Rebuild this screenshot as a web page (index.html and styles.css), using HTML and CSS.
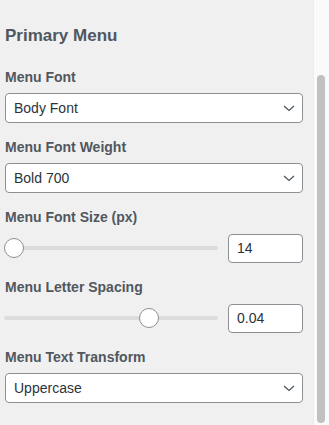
FILE: index.html
```html
<!DOCTYPE html>
<html>
<head>
<meta charset="utf-8">
<link rel="stylesheet" href="styles.css">
</head>
<body>
<div class="frame">
  <main class="panel">
    <h2 class="heading">Primary Menu</h2>

    <div class="field">
      <label class="label">Menu Font</label>
      <div class="select"><span>Body Font</span><svg class="chev" viewBox="0 0 12 7"><path d="M1 1l5 4.5L11 1"/></svg></div>
    </div>

    <div class="field">
      <label class="label">Menu Font Weight</label>
      <div class="select"><span>Bold 700</span><svg class="chev" viewBox="0 0 12 7"><path d="M1 1l5 4.5L11 1"/></svg></div>
    </div>

    <div class="field">
      <label class="label">Menu Font Size (px)</label>
      <div class="range-row">
        <div class="slider"><div class="track"></div><div class="thumb" style="left: 0px"></div></div>
        <div class="num">14</div>
      </div>
    </div>

    <div class="field">
      <label class="label">Menu Letter Spacing</label>
      <div class="range-row">
        <div class="slider"><div class="track"></div><div class="thumb" style="left: 135px"></div></div>
        <div class="num">0.04</div>
      </div>
    </div>

    <div class="field">
      <label class="label">Menu Text Transform</label>
      <div class="select"><span>Uppercase</span><svg class="chev" viewBox="0 0 12 7"><path d="M1 1l5 4.5L11 1"/></svg></div>
    </div>
  </main>
  <aside class="scrollbar"><div class="sb-thumb"></div></aside>
</div>
</body>
</html>
```

FILE: styles.css
```css
html, body {
  margin: 0;
  padding: 0;
  background: #f0f0f1;
  font-family: "Liberation Sans", Arial, sans-serif;
}

.frame {
  display: flex;
  height: 425px;
  overflow: hidden;
}

.panel {
  width: 298px;
  padding: 25px 10px 0 5px;
}

.heading {
  margin: 0 0 20px;
  font-size: 17px;
  line-height: 22px;
  font-weight: 700;
  color: #50575e;
}

.field {
  display: flex;
  flex-direction: column;
  gap: 6px;
  margin-bottom: 14px;
}

.label {
  font-size: 14px;
  line-height: 20px;
  font-weight: 700;
  color: #50575e;
}

.select {
  box-sizing: border-box;
  height: 30px;
  border: 1px solid #8c8f94;
  border-radius: 4px;
  background: #fff;
  display: flex;
  align-items: center;
  justify-content: space-between;
  padding: 0 7px 0 8px;
  font-size: 14px;
  color: #2c3338;
}

.chev {
  width: 12px;
  height: 7px;
  fill: none;
  stroke: #50575e;
  stroke-width: 1.3;
}

.range-row {
  display: flex;
  align-items: center;
  gap: 10px;
  height: 30px;
}

.slider {
  position: relative;
  flex: 1;
  height: 20px;
  margin-left: -1px;
}

.track {
  position: absolute;
  left: 0;
  right: 0;
  top: 8px;
  height: 4px;
  border-radius: 2px;
  background: #dcdcde;
}

.thumb {
  position: absolute;
  top: 0;
  width: 20px;
  height: 20px;
  box-sizing: border-box;
  border: 1px solid #8c8f94;
  border-radius: 50%;
  background: #fff;
}

.num {
  box-sizing: border-box;
  width: 75px;
  height: 29px;
  border: 1px solid #8c8f94;
  border-radius: 4px;
  background: #fff;
  display: flex;
  align-items: center;
  padding-left: 8px;
  font-size: 14px;
  color: #2c3338;
}

.scrollbar {
  flex: 1;
  background: #fafafa;
  border-left: 1px solid #ececec;
  display: flex;
  justify-content: center;
  align-items: flex-start;
  padding-top: 75px;
  padding-right: 2px;
}

.sb-thumb {
  width: 8px;
  height: 348px;
  border-radius: 4px;
  background: #c1c1c1;
}
```
